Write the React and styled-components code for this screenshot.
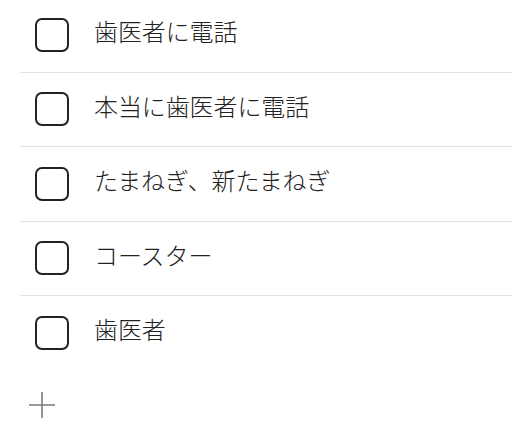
import React from "react";
import styled, { createGlobalStyle } from "styled-components";

const GlobalStyle = createGlobalStyle`
    html, body {
        margin: 0;
        padding: 0;
        background: #fff;
    }
    body {
        font-family: "Noto Sans CJK JP", "Noto Sans", sans-serif;
        color: #222;
    }
`;

const List = styled.ul`
    list-style: none;
    margin: -2px 0 0 20px;
    padding: 0;
`;

const Row = styled.li`
    display: flex;
    align-items: center;
    gap: 25px;
    height: 73.5px;
    padding-left: 15px;
    border-bottom: ${(props) => (props.last ? "none" : "1.5px solid #e2e2e2")};
`;

const Box = styled.span`
    box-sizing: border-box;
    flex: none;
    width: 34px;
    height: 34px;
    border: 2.5px solid #222;
    border-radius: 7px;
`;

const Label = styled.span`
    font-size: 24px;
    font-weight: 300;
    line-height: 1;
    letter-spacing: -0.1px;
    padding-bottom: 7px;
`;

const AddRow = styled.div`
    display: flex;
    align-items: center;
    height: 70px;
    padding-left: 29px;
`;

const items = [
    "歯医者に電話",
    "本当に歯医者に電話",
    "たまねぎ、新たまねぎ",
    "コースター",
    "歯医者",
];

const App = () => {
    return (
        <>
            <GlobalStyle />
            <List>
                {items.map((item, i) => (
                    <Row key={i} last={i === items.length - 1}>
                        <Box />
                        <Label>{item}</Label>
                    </Row>
                ))}
            </List>
            <AddRow>
                <svg width="26" height="26" viewBox="0 0 26 26">
                    <path d="M13 0V26M0 13H26" stroke="#7a7a7a" strokeWidth="1.6" fill="none" />
                </svg>
            </AddRow>
        </>
    );
};

export default App;
